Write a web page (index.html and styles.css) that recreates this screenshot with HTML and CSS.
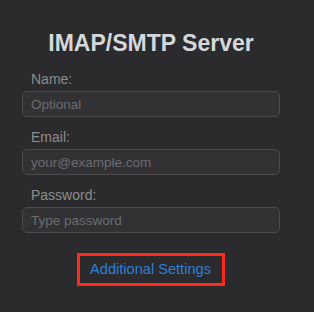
FILE: index.html
```html
<!DOCTYPE html>
<html>
<head>
<meta charset="utf-8">
<link rel="stylesheet" href="styles.css">
</head>
<body>
<div class="panel">
  <h1 class="title">IMAP/SMTP Server</h1>
  <div class="form">
    <div class="field">
      <label class="label">Name:</label>
      <div class="input"><span class="placeholder">Optional</span></div>
    </div>
    <div class="field">
      <label class="label">Email:</label>
      <div class="input"><span class="placeholder">your@example.com</span></div>
    </div>
    <div class="field">
      <label class="label">Password:</label>
      <div class="input"><span class="placeholder">Type password</span></div>
    </div>
  </div>
  <div class="actions">
    <a class="more">Additional Settings</a>
  </div>
</div>
</body>
</html>
```
FILE: styles.css
```css
html, body {
  margin: 0;
  padding: 0;
  background: #2b2b2d;
  height: 100%;
}
body {
  font-family: "Liberation Sans", Arial, sans-serif;
  color: #d6d9dc;
}
.panel {
  width: 258px;
  padding: 0 0 0 22px;
  display: flex;
  flex-direction: column;
}
.title {
  margin: 30px 0 0 0;
  font-size: 23px;
  line-height: 26px;
  font-weight: bold;
  text-align: center;
  color: #d4d8dc;
}
.form {
  margin-top: 15px;
  display: flex;
  flex-direction: column;
  gap: 12px;
}
.field {
  display: flex;
  flex-direction: column;
  gap: 3px;
}
.label {
  padding-left: 9px;
  font-size: 14px;
  line-height: 17px;
  color: #8b8c8e;
}
.input {
  height: 24px;
  border: 1px solid #4a4a4d;
  border-radius: 5px;
  background: #323235;
  display: flex;
  align-items: center;
  padding-left: 8px;
}
.placeholder {
  font-size: 13.5px;
  color: #6a6b6f;
}
.actions {
  margin-top: 20px;
  display: flex;
  justify-content: center;
}
.more {
  display: block;
  border: 3px solid #fe2a1c;
  padding: 6px 11px 6px 10px;
  font-size: 14.6px;
  line-height: 15px;
  color: #2f7fd8;
}
```
